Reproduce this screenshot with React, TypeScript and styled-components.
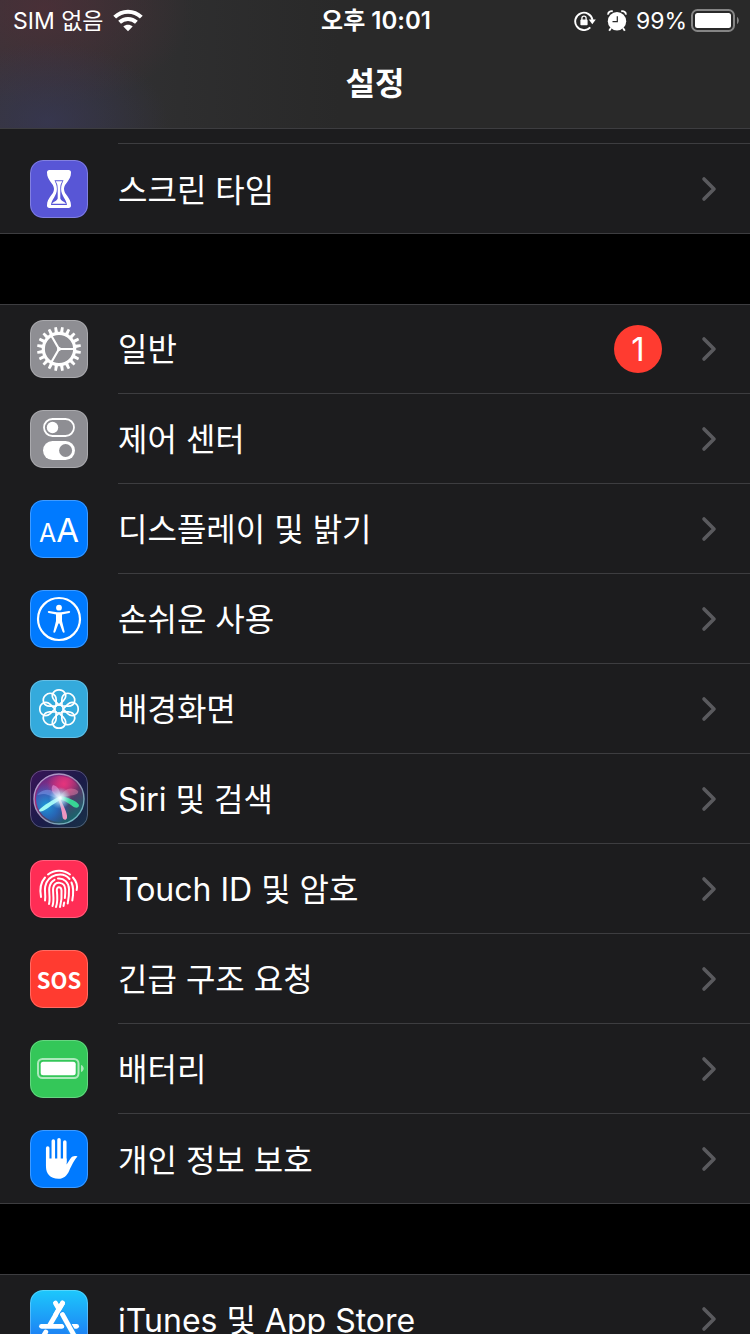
import React from "react";
import styled, { createGlobalStyle } from "styled-components";

const GlobalStyle = createGlobalStyle`
  *, *::before, *::after { box-sizing: border-box; }
  html, body { margin: 0; background: #000; }
  body {
    color: #fff;
    font-family: Inter, "Noto Sans CJK KR", sans-serif;
    -webkit-font-smoothing: antialiased;
  }
`;

const separator = "#3d3d40";

const Screen = styled.div`
  display: flex;
  flex-direction: column;
  height: 100vh;
  overflow: hidden;
  background: #000;
`;

const Header = styled.header`
  flex: none;
  border-bottom: 1px solid ${separator};
  background:
    radial-gradient(ellipse 120px 80px at 48px 122px, rgba(56, 56, 88, 0.7), rgba(56, 56, 88, 0)),
    radial-gradient(ellipse 150px 100px at 44px 8px, rgba(84, 46, 56, 0.65), rgba(84, 46, 56, 0)),
    linear-gradient(90deg, #363438 0, #2e2e2f 180px, #292929 340px);
`;

const StatusBar = styled.div`
  display: grid;
  grid-template-columns: 1fr auto 1fr;
  align-items: center;
  height: 40px;
  padding: 0 11px 0 13px;
  font-size: 23px;
  line-height: 40px;
`;

const StatusText = styled.span`
  padding-top: 1px;
`;

const StatusSide = styled.div<{ $end?: boolean }>`
  display: flex;
  align-items: center;
  justify-content: ${(p) => (p.$end ? "flex-end" : "flex-start")};
  gap: ${(p) => (p.$end ? 4 : 9)}px;
`;

const StatusIcons = styled.span`
  display: flex;
  align-items: center;
  gap: 11px;
  margin-right: 5px;
`;

const Clock = styled.time`
  font-weight: 600;
  font-size: 24px;
`;

const Title = styled.h1`
  margin: 0;
  height: 88px;
  line-height: 88px;
  font-size: 32px;
  font-weight: 600;
  text-align: center;
`;

const Scroller = styled.main`
  flex: 1;
  min-height: 0;
  overflow-y: auto;
  scrollbar-width: none;
  display: flex;
  flex-direction: column;
  gap: 70px;
`;

const Group = styled.ul<{ $continued?: boolean }>`
  flex: none;
  margin: 0;
  padding: 0;
  list-style: none;
  background: #1c1c1e;
  box-shadow: inset 0 ${(p) => (p.$continued ? 0 : 1)}px ${separator}, inset 0 -1px ${separator};
`;

const RowTail = styled.li`
  height: 15px;
  margin-left: 118px;
  border-bottom: 1px solid ${separator};
`;

const RowItem = styled.li`
  &:not(:last-child) > a > span:last-child {
    border-bottom: 1px solid ${separator};
  }
`;

const RowLink = styled.a`
  display: flex;
  align-items: center;
  gap: 30px;
  height: 90px;
  padding-left: 30px;
  color: inherit;
  text-decoration: none;
`;

const RowBody = styled.span`
  flex: 1;
  align-self: stretch;
  display: flex;
  align-items: center;
  gap: 39px;
  padding-right: 33px;
`;

const Label = styled.span`
  flex: 1;
  padding-top: 3px;
  font-size: 32px;
  line-height: 48px;
`;

const Badge = styled.span`
  width: 48px;
  height: 48px;
  border-radius: 50%;
  background: #ff3b30;
  font-size: 33px;
  line-height: 48px;
  text-align: center;
`;

const Tile = styled.span<{ $fill: string }>`
  position: relative;
  flex: none;
  display: flex;
  align-items: center;
  justify-content: center;
  width: 58px;
  height: 58px;
  border-radius: 13px;
  overflow: hidden;
  background: ${(p) => p.$fill};

  &::after {
    content: "";
    position: absolute;
    inset: 0;
    border: 1px solid rgba(255, 255, 255, 0.25);
    border-radius: inherit;
  }

  svg { display: block; }
`;

const SosText = styled.span`
  font-family: "Noto Sans CJK KR", sans-serif;
  font-size: 22px;
  font-weight: 700;
  line-height: 58px;
`;

const LetterPair = styled.span`
  display: flex;
  align-items: baseline;
  padding-top: 4px;
  font-size: 25px;
  line-height: 58px;
`;

const LargeLetter = styled.span`
  font-size: 33px;
`;

const Art = ({ children }: { children: React.ReactNode }) => (
  <svg width="58" height="58" viewBox="0 0 58 58" fill="none" aria-hidden="true">
    {children}
  </svg>
);

const Hourglass = () => (
  <Art>
    <path
      fill="#fff"
      d="M19.500 10H38.500C40.300 10 41 11 41 12.500C41 21 34 23 34 29C34 35 41 37 41 45.500C41 47 40.300 48 38.500 48H19.500C17.700 48 17 47 17 45.500C17 37 24 35 24 29C24 23 17 21 17 12.500C17 11 17.700 10 19.500 10Z"
    />
    <path
      fill="#5856d6"
      d="M24.500 20.300H33.500C32.500 23 31.100 25 31.100 29C31.100 36 36.500 39 37 45H21C21.500 39 26.900 36 26.900 29C26.900 25 25.500 23 24.500 20.300Z"
    />
    <path fill="#fff" d="M25.500 21.300H32.500C31 23.500 30.300 24.500 30.300 29V38.500C31 41 34.500 41.500 36 43.700H22C23.500 41.500 27 41 27.700 38.500V29C27.700 24.500 27 23.500 25.500 21.300Z" />
  </Art>
);

const Gear = () => (
  <Art>
    <g fill="#fff">
      {Array.from({ length: 20 }, (_, i) => (
        <path key={i} d="M27.300 13L27.700 7H30.300L30.700 13Z" transform={`rotate(${i * 18 + 9} 29 29)`} />
      ))}
    </g>
    <circle cx="29" cy="29" r="15.700" stroke="#fff" strokeWidth="3.200" />
    <path d="M29 29H44M29 29L21.500 16M29 29L21.500 42" stroke="#fff" strokeWidth="2.200" />
    <circle cx="29" cy="29" r="2" fill="#fff" />
  </Art>
);

const Toggles = () => (
  <Art>
    <rect x="14" y="9" width="30" height="17" rx="8.500" stroke="#fff" strokeWidth="1.800" />
    <circle cx="22.500" cy="17.500" r="5.700" fill="#fff" />
    <rect x="13" y="31" width="32" height="19" rx="9.500" fill="#fff" />
    <circle cx="35.600" cy="40.500" r="6.500" fill="#8e8e93" />
  </Art>
);

const Accessibility = () => (
  <Art>
    <circle cx="29" cy="29" r="21" stroke="#fff" strokeWidth="2.200" />
    <circle cx="29" cy="17.700" r="2.900" fill="#fff" />
    <path
      fill="#fff"
      d="M19 21.100L27 22.300H31L39 21.100C40.400 21 40.600 22.700 39.300 23L32 24.500V31L34.600 41.500C34.800 43 33.200 43.300 32.700 42L29.500 33.500H28.500L25.300 42C24.800 43.300 23.200 43 23.400 41.500L26 31V24.500L18.700 23C17.400 22.700 17.600 21 19 21.100Z"
    />
  </Art>
);

const Flower = () => (
  <Art>
    <g stroke="#fff" strokeWidth="1.700">
      {Array.from({ length: 8 }, (_, i) => (
        <path
          key={i}
          d="M29 24.800L24.300 20.300C20 15.500 23.500 9.800 29 9.800S38 15.500 33.700 20.300Z"
          transform={`rotate(${i * 45} 29 29)`}
        />
      ))}
      <circle cx="29" cy="29" r="4.200" />
    </g>
  </Art>
);

const Siri = () => (
  <Art>
    <defs>
      <linearGradient id="siriTop" x1="14" y1="6" x2="46" y2="50" gradientUnits="userSpaceOnUse">
        <stop offset="0" stopColor="#5b2a86" />
        <stop offset="0.300" stopColor="#a92c7c" />
        <stop offset="0.550" stopColor="#5a3468" />
        <stop offset="1" stopColor="#0f6a6c" />
      </linearGradient>
      <radialGradient id="siriPink" cx="34" cy="14" r="17" gradientUnits="userSpaceOnUse">
        <stop offset="0" stopColor="#e5347c" />
        <stop offset="1" stopColor="#e5347c" stopOpacity="0" />
      </radialGradient>
      <radialGradient id="siriBlue" cx="16" cy="36" r="24" gradientUnits="userSpaceOnUse">
        <stop offset="0" stopColor="#1c9bd8" />
        <stop offset="0.500" stopColor="#1f6fc8" stopOpacity="0.800" />
        <stop offset="1" stopColor="#1c58c8" stopOpacity="0" />
      </radialGradient>
      <radialGradient id="siriGlow" cx="30" cy="28" r="11" gradientUnits="userSpaceOnUse">
        <stop offset="0" stopColor="#fff" />
        <stop offset="0.350" stopColor="#d4f6ff" stopOpacity="0.750" />
        <stop offset="1" stopColor="#8ce8ff" stopOpacity="0" />
      </radialGradient>
      <linearGradient id="siriRing" x1="8" y1="8" x2="50" y2="50" gradientUnits="userSpaceOnUse">
        <stop offset="0" stopColor="#b79ad0" />
        <stop offset="0.500" stopColor="#9a8fb0" />
        <stop offset="1" stopColor="#66b8c0" />
      </linearGradient>
    </defs>
    <circle cx="29" cy="29" r="25" fill="url(#siriTop)" />
    <circle cx="29" cy="29" r="23" fill="url(#siriBlue)" />
    <circle cx="29" cy="29" r="23" fill="url(#siriPink)" />
    <path d="M30 28C24 19 16 17 8 24C6 27 12 22 18 25C23 27 26 28 30 28Z" fill="#7fa0f0" opacity="0.500" />
    <path d="M30 28C22 25 20 19 23 15C29 16 31 23 30 28Z" fill="#e79ade" opacity="0.600" />
    <path d="M30 28C33 19 41 16 48 21C50 26 38 25 30 28Z" fill="#e58cae" opacity="0.450" />
    <path d="M29 26C38 27 47 31 49 35C49 39 44 38 41 35C37 32 33 30 29 29Z" fill="#38dc98" opacity="0.950" />
    <path d="M29 27C33 34 38 44 37 48C36 51 33 50 32.500 47C32 41 30 34 28 29Z" fill="#f79ac4" opacity="0.950" />
    <path d="M31 26C23 29 13 36 9 40C9 43 14 41 18 38C22 35 28 31 32 29Z" fill="#a8fff8" opacity="0.950" />
    <circle cx="30" cy="28" r="11" fill="url(#siriGlow)" />
    <circle cx="29" cy="29" r="25" stroke="url(#siriRing)" strokeWidth="1.400" />
  </Art>
);

const Fingerprint = () => (
  <Art>
    <g stroke="#fff" strokeWidth="2" strokeLinecap="round">
      <path d="M18 14.500C24.500 9.500 33.500 9.500 40 14.500" />
      <path d="M11 37C9.500 29 11 22 15 17.500" />
      <path d="M43 17.500C47 22 47.700 26 46.700 30" />
      <path d="M15 40.500C16 35 14.200 31 15.200 26.500C18 14 33 11 39.500 19" />
      <path d="M41.500 22.500C44 28 43.300 35 42.300 40.500" />
      <path d="M19 44C20.500 38 18.700 32 19.300 28C20 23.500 22 21 24.500 19.800" />
      <path d="M28 18.500C34 18 38.800 22.500 39 29C39.200 34.500 38.600 39 37.700 43.500" />
      <path d="M22.500 46C24.800 39 22.300 32 23.200 28C25 20.500 34.600 21.500 35.200 29C35.400 32 35.200 35 34.900 38" />
      <path d="M34.200 42.500L33.500 46" />
      <path d="M26 47C28 41 27.500 36 26.800 30.500C26.500 26 31.300 26 31.500 30.500C32 37 31.300 42 30 47" />
    </g>
  </Art>
);

const BatteryTile = () => (
  <Art>
    <rect x="8" y="19" width="40.500" height="19" rx="4.500" stroke="#fff" strokeOpacity="0.600" strokeWidth="2" />
    <rect x="10.700" y="21.700" width="35" height="13.600" rx="2.500" fill="#fff" />
    <path d="M51 25C54.600 26.300 54.600 30.700 51 32Z" fill="#fff" fillOpacity="0.600" />
  </Art>
);

const Hand = () => (
  <Art>
    <g stroke="#fff" strokeWidth="3.500" strokeLinecap="round">
      <path d="M17.700 18V36" />
      <path d="M23.300 11V32" />
      <path d="M29 9.700V32" />
      <path d="M34.800 12V32" />
    </g>
    <path
      fill="#fff"
      d="M16 28.500H36.600V34.500L40.500 28.500C42.500 25.800 45 25.700 47.500 26.500C44.500 29.500 41.500 35.500 39.300 40.500C37 45.800 33.500 48.800 28.500 48.800C20 48.800 16 43.500 16 37Z"
    />
  </Art>
);

const AppStore = () => (
  <Art>
    <g stroke="#fff" strokeWidth="4.800" strokeLinecap="round">
      <path d="M32.600 13L19.500 35.500" />
      <path d="M11.500 36.300H32" />
      <path d="M41 36.300H46.600" />
      <path d="M15.800 42L14 45" />
      <path d="M25.400 13L28 17.500" />
    </g>
    <path d="M32 25L45 47" stroke="#1d96f8" strokeWidth="7.400" strokeLinecap="round" />
    <path d="M32.600 13L25.500 25" stroke="#fff" strokeWidth="4.800" strokeLinecap="round" />
    <path d="M32.500 24.500L45 47" stroke="#fff" strokeWidth="4.800" strokeLinecap="round" />
  </Art>
);

const Wifi = () => (
  <svg width="30" height="23" viewBox="0 0 30 23" aria-label="Wi-Fi">
    <g fill="none" stroke="#fff" strokeWidth="4">
      <path d="M1.700 8.200C9.200 0.800 20.800 0.800 28.300 8.200" />
      <path d="M6.600 13.300C11.300 8.800 18.700 8.800 23.400 13.300" />
    </g>
    <path fill="#fff" d="M10.300 17.500C13 15.100 17 15.100 19.700 17.500L15 22.300Z" />
  </svg>
);

const RotationLock = () => (
  <svg width="22" height="20" viewBox="0 0 22 20" aria-label="Rotation lock">
    <path d="M16.300 16.300A8.700 8.700 0 1 1 18.500 9" fill="none" stroke="#fff" strokeWidth="1.900" />
    <path d="M14.800 8.500H21.800L18.300 13.200Z" fill="#fff" />
    <rect x="6.400" y="8.600" width="7.200" height="5.600" rx="0.800" fill="#fff" />
    <path d="M7.900 9V7.300C7.900 4.500 12.100 4.500 12.100 7.300V9" fill="none" stroke="#fff" strokeWidth="1.300" />
  </svg>
);

const Alarm = () => (
  <svg width="20" height="22" viewBox="0 0 20 22" aria-label="Alarm">
    <circle cx="10" cy="11.200" r="9.200" fill="#fff" />
    <path d="M1.200 4.600C0.900 2 3.500 0.700 5.800 1.300M18.800 4.600C19.100 2 16.500 0.700 14.200 1.300" stroke="#fff" strokeWidth="1.900" fill="none" />
    <path d="M4 18L2.200 20.800M16 18L17.800 20.800" stroke="#fff" strokeWidth="1.900" />
    <path d="M10.300 6.200V11.700H5.500" fill="none" stroke="#2a2a2a" strokeWidth="1.200" />
  </svg>
);

const StatusBattery = () => (
  <svg width="48" height="24" viewBox="0 0 48 24" aria-label="Battery">
    <rect x="1" y="1" width="42" height="21" rx="5.500" fill="none" stroke="#858585" strokeWidth="2" />
    <rect x="4" y="4" width="36" height="15" rx="2.500" fill="#fff" />
    <path d="M46 8C48.400 9.200 48.400 13.800 46 15Z" fill="#858585" />
  </svg>
);

const Chevron = () => (
  <svg width="16" height="26" viewBox="0 0 16 26" aria-hidden="true">
    <path d="M3 3L13 13L3 23" fill="none" stroke="#5a5a5e" strokeWidth="3.600" strokeLinecap="round" strokeLinejoin="round" />
  </svg>
);

type Item = { id: string; label: string; fill: string; icon: React.ReactNode; badge?: number };

const general: Item[] = [
  { id: "general", label: "일반", fill: "#8e8e93", icon: <Gear />, badge: 1 },
  { id: "control-center", label: "제어 센터", fill: "#8e8e93", icon: <Toggles /> },
  {
    id: "display",
    label: "디스플레이 및 밝기",
    fill: "#007aff",
    icon: (
      <LetterPair aria-hidden="true">
        <span>A</span>
        <LargeLetter>A</LargeLetter>
      </LetterPair>
    ),
  },
  { id: "accessibility", label: "손쉬운 사용", fill: "#007aff", icon: <Accessibility /> },
  { id: "wallpaper", label: "배경화면", fill: "#34aadc", icon: <Flower /> },
  { id: "siri", label: "Siri 및 검색", fill: "linear-gradient(135deg, #3a1458, #1a1c48 55%, #183248)", icon: <Siri /> },
  { id: "touch-id", label: "Touch ID 및 암호", fill: "#ff2d55", icon: <Fingerprint /> },
  { id: "sos", label: "긴급 구조 요청", fill: "#ff3b30", icon: <SosText aria-hidden="true">SOS</SosText> },
  { id: "battery", label: "배터리", fill: "#34c759", icon: <BatteryTile /> },
  { id: "privacy", label: "개인 정보 보호", fill: "#007aff", icon: <Hand /> },
];

const Row = ({ id, label, fill, icon, badge }: Item) => (
  <RowItem>
    <RowLink href={`#${id}`}>
      <Tile $fill={fill}>{icon}</Tile>
      <RowBody>
        <Label>{label}</Label>
        {badge !== undefined && <Badge>{badge}</Badge>}
        <Chevron />
      </RowBody>
    </RowLink>
  </RowItem>
);

export default function App() {
  return (
    <>
      <GlobalStyle />
      <Screen>
        <Header>
          <StatusBar>
            <StatusSide>
              <StatusText>SIM 없음</StatusText>
              <Wifi />
            </StatusSide>
            <Clock>오후 10:01</Clock>
            <StatusSide $end>
              <StatusIcons>
                <RotationLock />
                <Alarm />
              </StatusIcons>
              <StatusText>99%</StatusText>
              <StatusBattery />
            </StatusSide>
          </StatusBar>
          <Title>설정</Title>
        </Header>
        <Scroller>
          <Group $continued>
            <RowTail aria-hidden="true" />
            <Row id="screen-time" label="스크린 타임" fill="#5856d6" icon={<Hourglass />} />
          </Group>
          <Group>
            {general.map((item) => (
              <Row key={item.id} {...item} />
            ))}
          </Group>
          <Group>
            <Row
              id="app-store"
              label="iTunes 및 App Store"
              fill="linear-gradient(#1dc8fc, #1d6ff2)"
              icon={<AppStore />}
            />
          </Group>
        </Scroller>
      </Screen>
    </>
  );
}
